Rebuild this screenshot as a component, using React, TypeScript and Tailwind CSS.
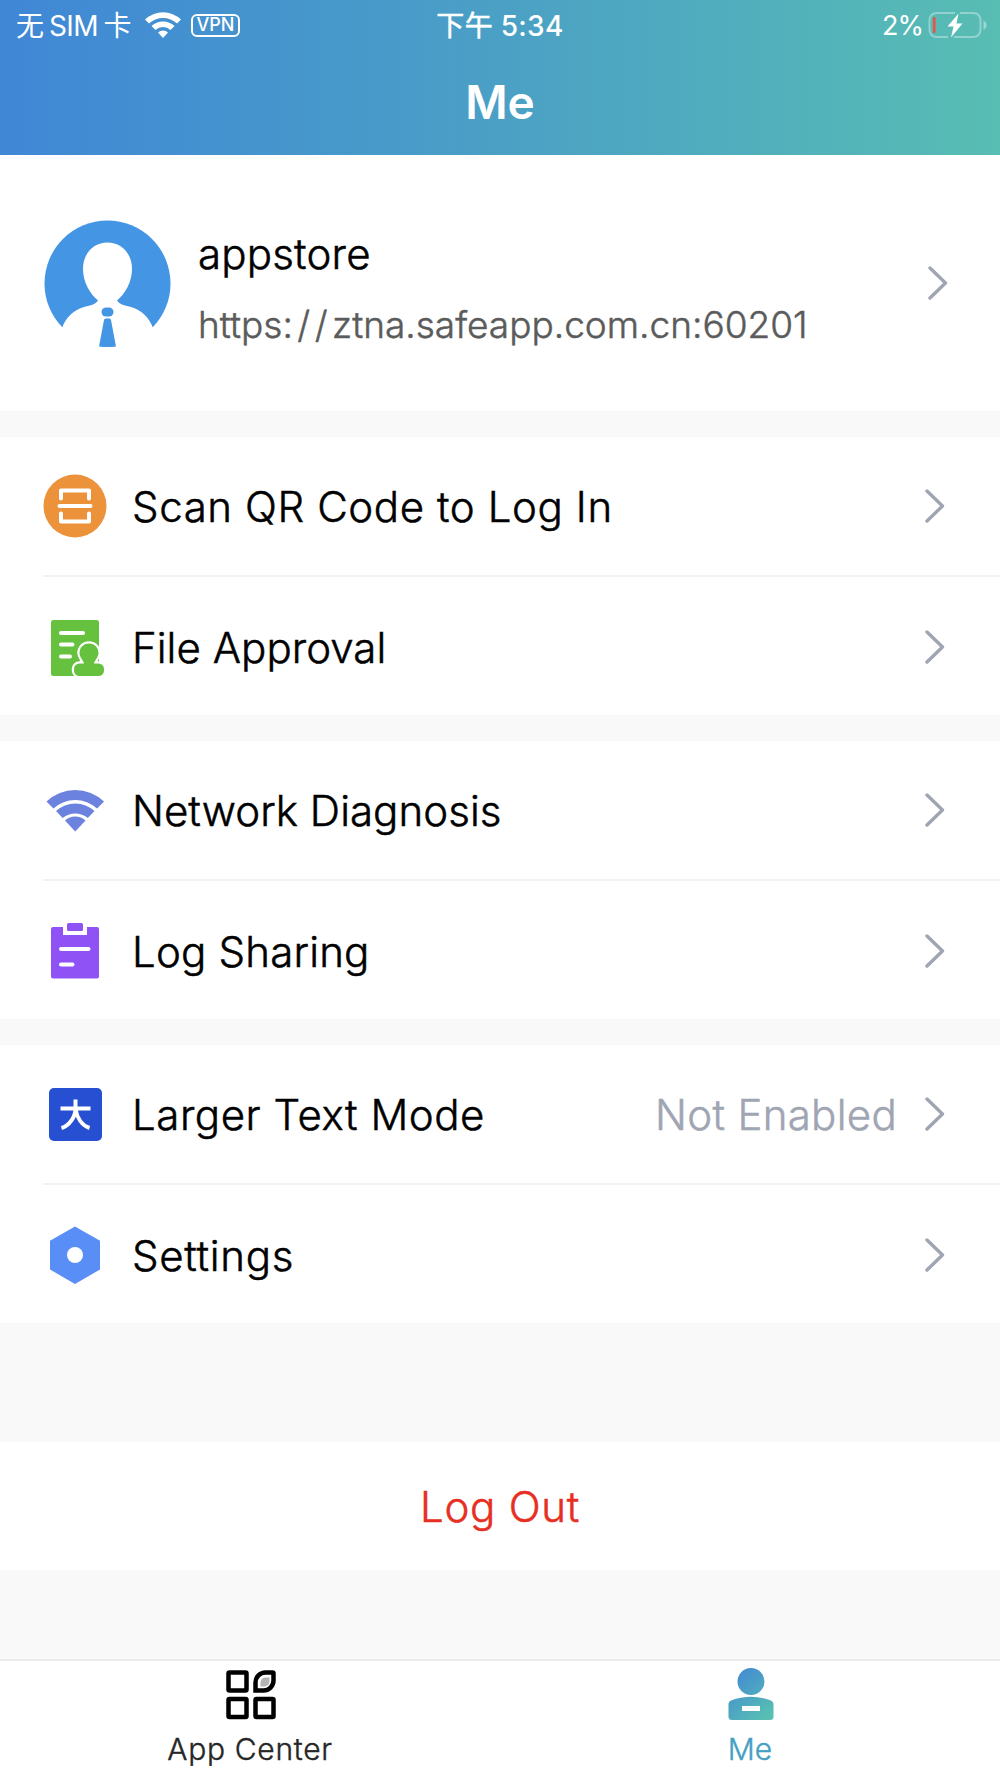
import type { ReactNode } from "react";

type Row = {
  label: string;
  icon: ReactNode;
  tracking: string;
  value?: string;
};

function ScanIcon() {
  return (
    <svg width="64" height="64" viewBox="0 0 64 64" fill="none">
      <circle cx="32" cy="32" r="31.5" fill="#ec923b" />
      <path
        d="M18 24.5V16.5H46V24.5M18 39.5V47.5H46V39.5M16.5 32H47.5"
        stroke="#fff"
        strokeWidth="4"
        strokeLinecap="round"
        strokeLinejoin="round"
      />
    </svg>
  );
}

function ApprovalIcon() {
  return (
    <svg width="64" height="64" viewBox="0 0 64 64" fill="none">
      <rect x="8" y="5" width="48" height="56" rx="2.5" fill="#66c23e" />
      <path
        d="M18 18H40M18 29.5H29.5M18 41.5H27"
        stroke="#fff"
        strokeWidth="4"
        strokeLinecap="round"
      />
      <path
        d="M46 28.5c-6 0-9.500 4.600-9.500 9.500 0 4.200 4 7.500 4.500 10.500H36.500a5.500 5.500 0 0 0-5.500 5.500v1.500a5.500 5.500 0 0 0 5.500 5.500H55.500a5.500 5.500 0 0 0 5.500-5.500V54a5.500 5.500 0 0 0-5.500-5.500H51c0.500-3 4.500-6.300 4.500-10.500 0-4.900-3.500-9.500-9.500-9.500Z"
        fill="#66c23e"
        stroke="#fff"
        strokeWidth="4.500"
        paintOrder="stroke"
      />
    </svg>
  );
}

function NetworkIcon() {
  return (
    <svg width="64" height="64" viewBox="0 0 64 64" fill="#6b83df">
      <path d="M3.500 23.500A41.500 41.500 0 0 1 61 23.500L54 30.500A32 32 0 0 0 10.500 30.500Z" />
      <path d="M13 33A28.500 28.500 0 0 1 51.500 33L44.800 40A19.500 19.500 0 0 0 19.700 40Z" />
      <path d="M22 42.500A15 15 0 0 1 42.500 42.500L32.200 53.500Z" />
    </svg>
  );
}

function LogIcon() {
  return (
    <svg width="64" height="64" viewBox="0 0 64 64" fill="none">
      <path
        d="M10 8H20V16H44V8H54A2 2 0 0 1 56 10V57.500A2 2 0 0 1 54 59.500H10A2 2 0 0 1 8 57.500V10A2 2 0 0 1 10 8Z"
        fill="#8f53f5"
      />
      <rect x="24" y="4" width="16" height="8" rx="1.500" fill="#8f53f5" />
      <path
        d="M18 30H45.500M18 45.500H29.500"
        stroke="#fff"
        strokeWidth="4"
        strokeLinecap="round"
      />
    </svg>
  );
}

function LargeTextIcon() {
  return (
    <span className="flex size-[53px] items-center justify-center rounded-[5px] bg-[#264fd2]">
      <svg width="33" height="33" viewBox="0 0 33 33" fill="none" stroke="#fff" strokeWidth="4">
        <path d="M1.500 10.500H31.500M16.500 1.500V10.500C16.500 19 10 28 2.500 30M16.500 11C18 20 23 27.500 30.500 30" />
      </svg>
    </span>
  );
}

function SettingsIcon() {
  return (
    <svg width="64" height="64" viewBox="0 0 64 64">
      <path d="M32 3.500L57 17.700V46.500L32 61L7 46.500V17.700Z" fill="#598ef7" />
      <circle cx="32" cy="32" r="8" fill="#fff" />
    </svg>
  );
}

function Chevron() {
  return (
    <svg width="20" height="34" viewBox="0 0 20 34" fill="none" className="shrink-0">
      <path
        d="M2 2L17.500 17L2 32"
        stroke="#a0a5b3"
        strokeWidth="3.400"
        strokeLinecap="round"
        strokeLinejoin="round"
      />
    </svg>
  );
}

const groups: Row[][] = [
  [
    { label: "Scan QR Code to Log In", icon: <ScanIcon />, tracking: "tracking-[0.6px]" },
    { label: "File Approval", icon: <ApprovalIcon />, tracking: "tracking-[0.05px]" },
  ],
  [
    { label: "Network Diagnosis", icon: <NetworkIcon />, tracking: "tracking-[0.05px]" },
    { label: "Log Sharing", icon: <LogIcon />, tracking: "tracking-[0.2px]" },
  ],
  [
    {
      label: "Larger Text Mode",
      icon: <LargeTextIcon />,
      tracking: "tracking-[0.55px]",
      value: "Not Enabled",
    },
    { label: "Settings", icon: <SettingsIcon />, tracking: "tracking-[0.7px]" },
  ],
];

function StatusBar() {
  return (
    <div className="grid h-[50px] grid-cols-3 items-center text-[28px] leading-none">
      <div className="flex items-center pl-[16px]">
        <span className="pt-px tracking-[-0.5px] [word-spacing:-2px]">无 SIM 卡</span>
        <svg width="38" height="30" viewBox="0 0 38 30" fill="#fff" className="ml-[13px]">
          <path d="M1 9.500A26 26 0 0 1 37 9.500L33 13.500A20.500 20.500 0 0 0 5 13.500Z" />
          <path d="M7.500 16A16.700 16.700 0 0 1 30.500 16L26.500 20A11 11 0 0 0 11.500 20Z" />
          <path d="M14 22.500A7.500 7.500 0 0 1 24 22.500L19 28Z" />
        </svg>
        <span className="ml-[9px] flex h-[23px] w-[49px] items-center justify-center rounded-[6px] border-2 border-white text-[18px] font-medium">
          VPN
        </span>
      </div>
      <div className="pt-px text-center font-medium tracking-[0.3px]">
        <span className="font-normal [-webkit-text-stroke:0.5px_white]">下午</span> 5:34
      </div>
      <div className="flex items-center justify-end pr-[13px]">
        <span className="pt-px text-[27px] tracking-[-1px]">2%</span>
        <svg width="60" height="30" viewBox="0 0 60 30" fill="none" className="ml-[4px]">
          <path
            d="M28 3H9.500A7 7 0 0 0 2.500 10V20A7 7 0 0 0 9.500 27H21M33 3H46.500A7 7 0 0 1 53.500 10V20A7 7 0 0 1 46.500 27H27"
            stroke="#fff"
            strokeOpacity="0.35"
            strokeWidth="2"
          />
          <path d="M56.500 10.500C60.500 12.500 60.500 18 56.500 20Z" fill="#fff" fillOpacity="0.4" />
          <rect x="6" y="7" width="2.500" height="16" rx="1" fill="#fb4b3c" />
          <path d="M31.500 3.500L20.500 16.500H26.500L24 27.500L35.500 13.500H29.500Z" fill="#fff" />
        </svg>
      </div>
    </div>
  );
}

function Profile() {
  return (
    <section className="flex h-[256px] items-center bg-white pr-[52px] pl-[44px]">
      <svg width="127" height="127" viewBox="0 0 127 127" className="shrink-0">
        <circle cx="63.500" cy="63.500" r="63" fill="#4495e4" />
        <path
          d="M63.500 22.500C77 22.500 88 33 88 49C88 62 81 74 73 80.500C76 85 82 85.500 87 87C97 90 105 97 109 108L107 127H20L18 108C22 97 30 90 40 87C45 85.500 51 85 54 80.500C46 74 39 62 39 49C39 33 50 22.500 63.500 22.500Z"
          fill="#fff"
        />
        <rect x="57.500" y="87.500" width="12" height="9" rx="4.500" fill="#4495e4" />
        <path
          d="M61.500 98.500H65.500Q66.500 98.500 67 100L72 126.500Q63.500 127.500 55 126.500L60 100Q60.500 98.500 61.500 98.500Z"
          fill="#4495e4"
        />
      </svg>
      <div className="ml-[27px] flex-1 pt-[11px] font-light [-webkit-text-stroke:0.5px_currentColor]">
        <div className="text-[42px] leading-[50px] tracking-[0.2px] text-black">appstore</div>
        <div className="mt-[22px] text-[37px] leading-[48px] text-[#5b5b5b]">
          https<span className="tracking-[4.500px]">://</span>ztna.safeapp.com.cn:60201
        </div>
      </div>
      <Chevron />
    </section>
  );
}

function MenuRow({ row, divided }: { row: Row; divided: boolean }) {
  return (
    <div
      className={`ml-[43px] flex items-center pr-[55px] ${
        divided ? "h-[140px] border-b-2 border-[#f1f1f7]" : "h-[138px] pt-[2px]"
      }`}
    >
      <div className="flex w-[64px] shrink-0 justify-center">{row.icon}</div>
      <div
        className={`ml-[25px] flex-1 pt-px text-[42px] leading-[50px] font-light text-black [-webkit-text-stroke:0.5px_currentColor] ${row.tracking}`}
      >
        {row.label}
      </div>
      {row.value && (
        <div className="mr-[28px] pt-px text-[42px] leading-[50px] font-light tracking-[0.3px] text-[#a0a5b3] [-webkit-text-stroke:0.5px_currentColor]">
          {row.value}
        </div>
      )}
      <Chevron />
    </div>
  );
}

function TabBar() {
  return (
    <nav className="mt-[89px] grid h-[119px] grid-cols-2 border-t-2 border-[#ebebeb] bg-white text-[30px] leading-[36px]">
      <div className="flex flex-col items-center pt-[8px]">
        <svg
          width="52"
          height="52"
          viewBox="0 0 52 52"
          fill="none"
          stroke="#000"
          strokeWidth="4.500"
          className="ml-[2px]"
        >
          <rect x="3.500" y="3.500" width="18" height="18" rx="1" />
          <rect x="3.500" y="30" width="18" height="18" rx="1" />
          <rect x="30.500" y="30" width="18" height="18" rx="1" />
          <path d="M30.500 21.500V13.500A10 10 0 0 1 40.500 3.500H47.500A1 1 0 0 1 48.500 4.500V11.500A10 10 0 0 1 38.500 21.500Z" />
          <path
            d="M35.500 17.500V13.500A5 5 0 0 1 40.500 8.500H44.500V12.500A5 5 0 0 1 39.500 17.500Z"
            fill="#b3b3b3"
            stroke="none"
          />
        </svg>
        <span className="mt-[10px] font-light tracking-[0.7px] text-[#262626] [-webkit-text-stroke:0.4px_currentColor]">
          App Center
        </span>
      </div>
      <div className="flex flex-col items-center pt-[6px]">
        <svg width="46" height="54" viewBox="0 0 46 54" className="ml-[2px]">
          <defs>
            <linearGradient id="person" x1="0" y1="0" x2="46" y2="54" gradientUnits="userSpaceOnUse">
              <stop offset="0.1" stopColor="#4289d3" />
              <stop offset="0.9" stopColor="#58c0b2" />
            </linearGradient>
          </defs>
          <circle cx="23" cy="14.500" r="13.500" fill="url(#person)" />
          <path
            d="M.5 37Q.5 34.500 3 33.500Q23 26 43 33.500Q45.500 34.500 45.500 37V49.500Q45.500 53 42 53H4Q.5 53 .5 49.500Z"
            fill="url(#person)"
          />
          <rect x="14" y="39" width="18" height="5" fill="#fff" />
        </svg>
        <span className="mt-[10px] font-light text-[#45a0c5] [-webkit-text-stroke:0.4px_currentColor]">
          Me
        </span>
      </div>
    </nav>
  );
}

export default function App() {
  return (
    <div className="flex h-[1778px] w-[1000px] flex-col overflow-hidden bg-[#f9f9f9] font-['Inter','Noto_Sans_CJK_SC',sans-serif]">
      <header className="h-[155px] shrink-0 bg-linear-to-r from-[#4087d6] via-[#4ba0c5] to-[#58bdb3] text-white">
        <StatusBar />
        <h1 className="pt-[24px] text-center text-[46px] leading-[56px] font-semibold">Me</h1>
      </header>
      <Profile />
      {groups.map((rows) => (
        <section key={rows[0].label} className="mt-[26px] bg-white">
          {rows.map((row, i) => (
            <MenuRow key={row.label} row={row} divided={i < rows.length - 1} />
          ))}
        </section>
      ))}
      <button className="mt-[119px] h-[128px] shrink-0 bg-white pt-px text-[42px] leading-[50px] font-light tracking-[0.7px] text-[#e62f22] [-webkit-text-stroke:0.5px_currentColor]">
        Log Out
      </button>
      <TabBar />
    </div>
  );
}
